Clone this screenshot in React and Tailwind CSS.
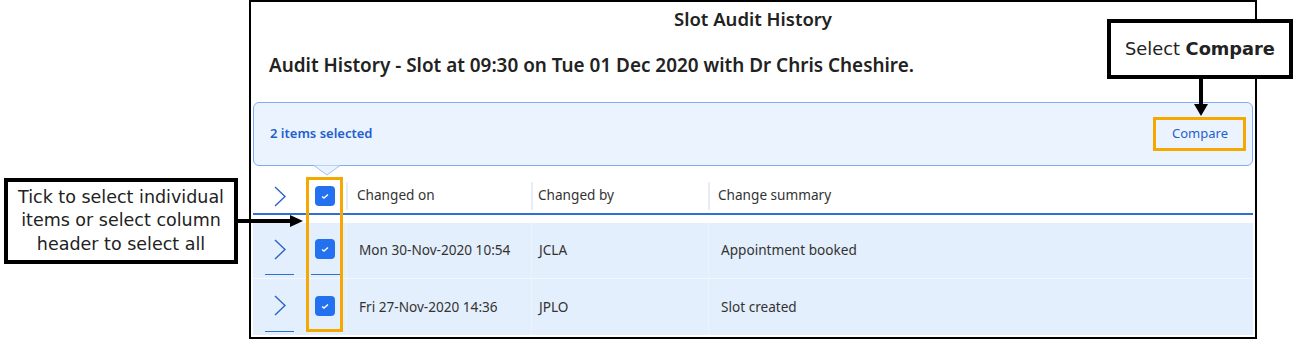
import React from "react";

const ui = { fontFamily: '"Noto Sans", "Open Sans", sans-serif' };
const anno = { fontFamily: '"DejaVu Sans", "Liberation Sans", sans-serif' };

function Chevron() {
  return (
    <svg width="12" height="21" viewBox="0 0 12 21" fill="none">
      <path d="M1 1 L11 10.5 L1 20" stroke="#2c63c6" strokeWidth="1.4" />
    </svg>
  );
}

function Check() {
  return (
    <div className="w-[20px] h-[20px] rounded-[4px] bg-[#2370f0] flex items-center justify-center">
      <svg width="10" height="8" viewBox="0 0 10 8" fill="none">
        <path d="M2 4.5 L4 6 L8 2.5" stroke="white" strokeWidth="1.4" />
      </svg>
    </div>
  );
}

function Row({ date, by, summary, last }) {
  return (
    <div className={`flex h-[56px] bg-[#e3effc] ${last ? "" : "border-b border-[#f4f8fe]"}`}>
      <div className="w-[52px] flex flex-col items-center">
        <div className="flex-1 flex items-center justify-center pl-[1px] pt-[1px]">
          <Chevron />
        </div>
        <div className="w-[29px] h-[1px] bg-[#2f6fd8] mb-[3px]" />
      </div>
      <div className="w-[41px] flex flex-col items-center">
        <div className="flex-1 flex items-center justify-center pr-[1px] pt-[1px]">
          <Check />
        </div>
        <div className="w-[29px] h-[1px] bg-[#2f6fd8] mb-[3px]" />
      </div>
      <div className="w-[185px] border-l border-[#edf3fb] flex items-center pl-[12px] text-[13.6px] text-[#333]">{date}</div>
      <div className="w-[177px] border-l border-[#edf3fb] flex items-center pl-[7px] text-[13.6px] text-[#333]">{by}</div>
      <div className="flex-1 border-l border-[#edf3fb] flex items-center pl-[12px] text-[13.6px] text-[#333]">{summary}</div>
    </div>
  );
}

export default function App() {
  return (
    <div className="relative w-[1295px] h-[339px] bg-white overflow-hidden" style={ui}>
      <div className="ml-[249px] w-[1008px] h-[339px] border-2 border-black flex flex-col">
        <div className="h-[35px] flex items-center justify-center pb-[1px] text-[18.5px] font-semibold text-[#222]">
          Slot Audit History
        </div>
        <div className="h-[60px] flex items-center pl-[18px] pb-[4px] text-[18.9px] font-semibold text-[#222]">
          Audit History - Slot at 09:30 on Tue 01 Dec 2020 with Dr Chris Cheshire.
        </div>
        <div className="relative mx-[2px] mt-[5px] h-[64px] rounded-[6px] border border-[#7eaef0] bg-[#ebf3fe] flex items-center justify-between pl-[16px] pr-[24px]">
          <span className="text-[13px] font-semibold text-[#1f5fce]">2 items selected</span>
          <span className="text-[13px] text-[#1f5fce]">Compare</span>
          <svg className="absolute left-[60px] top-[62px]" width="26" height="11" viewBox="0 0 26 11">
            <path d="M0 0.5 L13 10 L26 0.5" fill="#ebf3fe" stroke="#9cc0f2" strokeWidth="1" />
          </svg>
        </div>
        <div className="mx-[2px] mt-[13px] h-[36px] flex items-center border-b-2 border-[#2f6fd8]">
          <div className="w-[52px] flex items-center justify-center pl-[1px]">
            <Chevron />
          </div>
          <div className="w-[41px] flex items-center justify-center pr-[1px]">
            <Check />
          </div>
          <div className="w-[185px] h-[28px] border-l-2 border-[#e6edf7] flex items-center pl-[9px] pb-[2px] text-[13.6px] text-[#333]">Changed on</div>
          <div className="w-[177px] h-[28px] border-l-2 border-[#e6edf7] flex items-center pl-[5px] pb-[2px] text-[13.6px] text-[#333]">Changed by</div>
          <div className="flex-1 h-[28px] border-l-2 border-[#e6edf7] flex items-center pl-[8px] pb-[2px] text-[13.6px] text-[#333]">Change summary</div>
        </div>
        <div className="mx-[2px] mt-[8px] flex flex-col">
          <Row date="Mon 30-Nov-2020 10:54" by="JCLA" summary="Appointment booked" />
          <Row date="Fri 27-Nov-2020 14:36" by="JPLO" summary="Slot created" last />
        </div>
      </div>

      {/* Orange highlight around checkbox column */}
      <div className="absolute left-[306px] top-[177px] w-[37px] h-[155px] border-[3px] border-[#f5a800]" />
      {/* Orange highlight around Compare */}
      <div className="absolute left-[1153px] top-[117px] w-[93px] h-[34px] border-[3px] border-[#f5a800]" />

      {/* Left callout */}
      <div
        className="absolute left-[4px] top-[178px] w-[234px] h-[86px] border-4 border-black bg-white flex flex-col items-center justify-center text-[17.5px] leading-[23.5px] text-[#222]"
        style={anno}
      >
        <span>Tick to select individual</span>
        <span>items or select column</span>
        <span>header to select all</span>
      </div>
      <svg className="absolute left-[238px] top-[214px]" width="66" height="14" viewBox="0 0 66 14">
        <rect x="0" y="5" width="54" height="4" fill="black" />
        <path d="M52 1 L65 7 L52 13 Z" fill="black" />
      </svg>

      {/* Top-right callout */}
      <div
        className="absolute left-[1107px] top-[19px] w-[186px] h-[60px] border-4 border-black bg-white flex items-center justify-center text-[17.8px] text-[#222]"
        style={anno}
      >
        <span>
          Select <b className="font-bold">Compare</b>
        </span>
      </div>
      <svg className="absolute left-[1193px] top-[79px]" width="16" height="38" viewBox="0 0 16 38">
        <rect x="6" y="0" width="4" height="27" fill="black" />
        <path d="M1 25 L8 37 L15 25 Z" fill="black" />
      </svg>
    </div>
  );
}
